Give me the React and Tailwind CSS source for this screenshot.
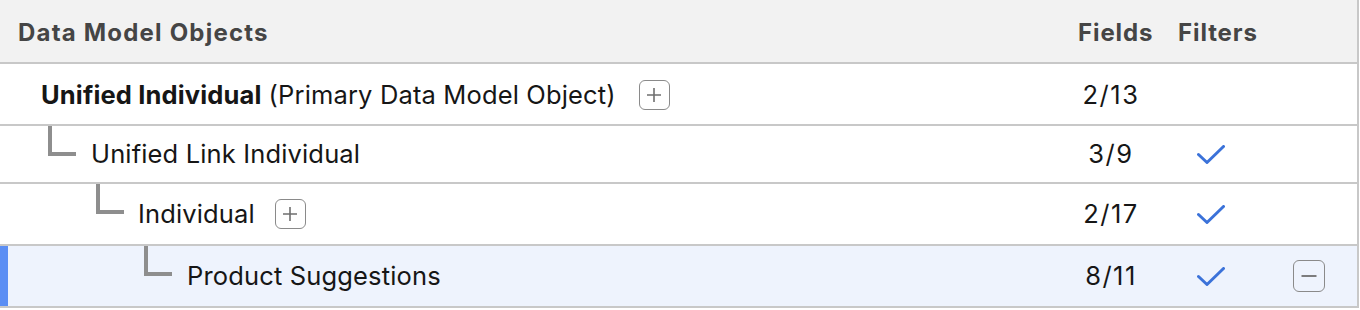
import React from "react";

function Check() {
  return (
    <svg width="28" height="19" viewBox="0 0 28 19" fill="none">
      <polyline points="1.5,9.5 10,17.5 26.5,1.5" stroke="#3b72d9" strokeWidth="3" strokeLinecap="round" strokeLinejoin="round" />
    </svg>
  );
}

function PlusBtn({ className = "" }) {
  return (
    <span className={"flex h-[30px] w-[31px] shrink-0 items-center justify-center rounded-[6px] border-[1.5px] border-[#8a8a8a] " + className}>
      <svg width="18" height="18" viewBox="0 0 18 18">
        <path d="M9 2v14M2 9h14" stroke="#6f6f6f" strokeWidth="1.6" />
      </svg>
    </span>
  );
}

function MinusBtn() {
  return (
    <span className="flex h-[32px] w-[32px] items-center justify-center rounded-[6px] border-[1.5px] border-[#8a8a8a]">
      <svg width="18" height="18" viewBox="0 0 18 18">
        <path d="M1.5 9h15" stroke="#6f6f6f" strokeWidth="1.8" />
      </svg>
    </span>
  );
}

function Connector() {
  return <div className="h-[30px] w-[28px] shrink-0 self-start border-b-4 border-l-4 border-[#8e8e8e]" />;
}

export default function App() {
  return (
    <div className="h-[310px] w-[1360px] bg-white font-['Inter',sans-serif] text-[25.5px] tracking-[0.15px] text-[#161616]">
      <div className="w-[1359px] border-r-2 border-[#c8c8c8]">
        {/* header */}
        <div className="flex h-[64px] items-center border-b-2 border-[#c8c8c8] bg-[#f2f2f2] pt-[3px] text-[24px] font-bold tracking-[1.2px] text-[#454545]">
          <div className="flex-1 pl-[18px]">Data Model Objects</div>
          <div className="w-[90px] pl-[12px] tracking-[0.9px]">Fields</div>
          <div className="w-[110px] pl-[22px] tracking-[0.9px]">Filters</div>
          <div className="w-[91px]" />
        </div>

        {/* row 1 */}
        <div className="flex h-[62px] items-center border-b-2 border-[#c8c8c8] pt-[2px]">
          <div className="flex flex-1 items-center pl-[41px]">
            <span className="font-bold">Unified Individual</span>
            <span className="ml-[7px]">(Primary Data Model Object)</span>
            <PlusBtn className="ml-[23px]" />
          </div>
          <div className="w-[90px] text-center tracking-[1.5px]">2/13</div>
          <div className="w-[110px]" />
          <div className="w-[91px]" />
        </div>

        {/* row 2 */}
        <div className="flex h-[58px] items-center border-b-2 border-[#c8c8c8]">
          <div className="flex h-full flex-1 items-center pl-[48px]">
            <Connector />
            <span className="ml-[15px]">Unified Link Individual</span>
          </div>
          <div className="w-[90px] text-center tracking-[1.5px]">3/9</div>
          <div className="flex w-[110px] justify-center">
            <Check />
          </div>
          <div className="w-[91px]" />
        </div>

        {/* row 3 */}
        <div className="flex h-[62px] items-center border-b-2 border-[#c8c8c8]">
          <div className="flex h-full flex-1 items-center pl-[96px]">
            <Connector />
            <span className="ml-[14px]">Individual</span>
            <PlusBtn className="ml-[20px]" />
          </div>
          <div className="w-[90px] text-center tracking-[1.5px]">2/17</div>
          <div className="flex w-[110px] justify-center">
            <Check />
          </div>
          <div className="w-[91px]" />
        </div>

        {/* row 4 */}
        <div className="flex h-[62px] items-center border-b-2 border-[#c8c8c8] bg-[#eef3fd]">
          <div className="flex h-full flex-1 items-center border-l-8 border-[#5b8ef4] pl-[136px]">
            <Connector />
            <span className="ml-[15px]">Product Suggestions</span>
          </div>
          <div className="w-[90px] text-center tracking-[1.5px]">8/11</div>
          <div className="flex w-[110px] justify-center">
            <Check />
          </div>
          <div className="flex w-[91px] justify-start pl-[27px]">
            <MinusBtn />
          </div>
        </div>
      </div>
    </div>
  );
}
